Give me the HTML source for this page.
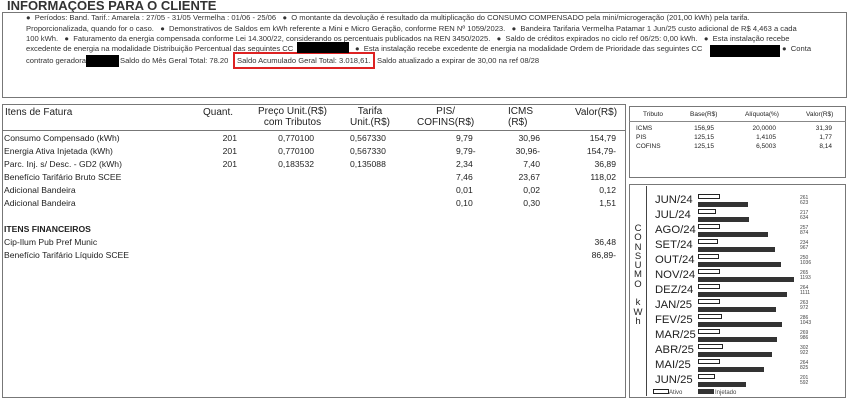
<!DOCTYPE html>
<html><head><meta charset="utf-8"><style>
body{margin:0;width:850px;height:400px;background:#fff;font-family:"Liberation Sans",Arial,sans-serif;color:#222;position:relative;overflow:hidden}
.a{position:absolute;white-space:nowrap}
.box{position:absolute;border:1.5px solid #777;box-sizing:border-box}
.t{font-size:8.6px;line-height:13px}
.s{font-size:7.6px;line-height:11px;color:#333}
.r{text-align:right}
.blk{position:absolute;background:#000}
.c{font-size:6.5px}
</style></head><body>
<div class="a" style="left:7px;top:-2px;font-size:13px;font-weight:bold;color:#333">INFORMAÇÕES PARA O CLIENTE</div>
<div class="box" style="left:2px;top:12px;width:845px;height:86px"></div>
<div class="a s" style="left:26px;top:12px">●&nbsp; Períodos: Band. Tarif.: Amarela : 27/05 - 31/05 Vermelha : 01/06 - 25/06 &nbsp; ●&nbsp; O montante da devolução é resultado da multiplicação do CONSUMO COMPENSADO pela mini/microgeração (201,00 kWh) pela tarifa.</div>
<div class="a s" style="left:26px;top:23px">Proporcionalizada, quando for o caso. &nbsp; ●&nbsp; Demonstrativos de Saldos em kWh referente a Mini e Micro Geração, conforme REN Nº 1059/2023. &nbsp; ●&nbsp; Bandeira Tarifaria Vermelha Patamar 1 Jun/25 custo adicional de R$ 4,463 a cada</div>
<div class="a s" style="left:26px;top:33px">100 kWh. &nbsp; ●&nbsp; Faturamento da energia compensada conforme Lei 14.300/22, considerando os percentuais publicados na REN 3450/2025. &nbsp; ●&nbsp; Saldo de créditos expirados no ciclo ref 06/25: 0,00 kWh. &nbsp; ●&nbsp; Esta instalação recebe</div>
<div class="a s" style="left:26px;top:43px">excedente de energia na modalidade Distribuição Percentual das seguintes CC</div>
<div class="a s" style="left:355px;top:43px">●&nbsp; Esta instalação recebe excedente de energia na modalidade Ordem de Prioridade das seguintes CC</div>
<div class="a s" style="left:782px;top:43px">●&nbsp; Conta</div>
<div class="a s" style="left:26px;top:55px">contrato geradora</div>
<div class="a s" style="left:120px;top:55px">Saldo do Mês Geral Total: 78.20</div>
<div class="a s" style="left:236px;top:55px;outline:2px solid #d22;outline-offset:1px;padding:0 1px">Saldo Acumulado Geral Total: 3.018,61.</div>
<div class="a s" style="left:377px;top:55px">Saldo atualizado a expirar de 30,00 na ref 08/28</div>
<div class="blk" style="left:297px;top:42px;width:52px;height:11px"></div>
<div class="blk" style="left:710px;top:45px;width:70px;height:12px"></div>
<div class="blk" style="left:86px;top:55px;width:33px;height:12px"></div>

<div class="box" style="left:2px;top:104px;width:624px;height:294px"></div>
<div class="a" style="left:2px;top:130px;width:624px;border-top:1.5px solid #777"></div>
<div class="a t" style="left:5px;top:106px;font-size:10px">Itens de Fatura</div>
<div class="a t" style="left:203px;top:106px;font-size:10px">Quant.</div>
<div class="a t" style="left:258px;top:106px;font-size:10px;text-align:center;line-height:11px">Preço Unit.(R$)<br>com Tributos</div>
<div class="a t" style="left:350px;top:106px;font-size:10px;text-align:center;line-height:11px">Tarifa<br>Unit.(R$)</div>
<div class="a t" style="left:417px;top:106px;font-size:10px;text-align:center;line-height:11px">PIS/<br>COFINS(R$)</div>
<div class="a t" style="left:508px;top:106px;font-size:10px;line-height:11px">ICMS<br>(R$)</div>
<div class="a t" style="left:575px;top:106px;font-size:10px">Valor(R$)</div>

<div class="a t" style="left:4px;top:132px">Consumo Compensado (kWh)<br>Energia Ativa Injetada (kWh)<br>Parc. Inj. s/ Desc. - GD2 (kWh)<br>Benefício Tarifário Bruto SCEE<br>Adicional Bandeira<br>Adicional Bandeira<br>&nbsp;<br><b>ITENS FINANCEIROS</b><br>Cip-Ilum Pub Pref Munic<br>Benefício Tarifário Líquido SCEE</div>
<div class="a t r" style="left:210px;top:132px;width:27px">201<br>201<br>201</div>
<div class="a t r" style="left:250px;top:132px;width:64px">0,770100<br>0,770100<br>0,183532</div>
<div class="a t" style="left:350px;top:132px">0,567330<br>0,567330<br>0,135088</div>
<div class="a t" style="left:456px;top:132px">9,79<br>9,79-<br>2,34<br>7,46<br>0,01<br>0,10</div>
<div class="a t r" style="left:500px;top:132px;width:40px">30,96<br>30,96-<br>7,40<br>23,67<br>0,02<br>0,30</div>
<div class="a t r" style="left:570px;top:132px;width:46px">154,79<br>154,79-<br>36,89<br>118,02<br>0,12<br>1,51<br>&nbsp;<br>&nbsp;<br>36,48<br>86,89-</div>

<div class="box" style="left:629px;top:106px;width:217px;height:72px"></div>
<div class="a" style="left:629px;top:121px;width:217px;border-top:1px solid #888"></div>
<div class="a c" style="left:643px;top:111px">Tributo</div>
<div class="a c" style="left:690px;top:111px">Base(R$)</div>
<div class="a c" style="left:745px;top:111px">Alíquota(%)</div>
<div class="a c" style="left:806px;top:111px">Valor(R$)</div>
<div class="a c" style="left:636px;top:124px;line-height:9px">ICMS<br>PIS<br>COFINS</div>
<div class="a c r" style="left:680px;top:124px;width:34px;line-height:9px">156,95<br>125,15<br>125,15</div>
<div class="a c r" style="left:740px;top:124px;width:36px;line-height:9px">20,0000<br>1,4105<br>6,5003</div>
<div class="a c r" style="left:800px;top:124px;width:32px;line-height:9px">31,39<br>1,77<br>8,14</div>

<div class="box" style="left:629px;top:184px;width:217px;height:214px"></div>
<div class="a" style="left:646px;top:186px;height:210px;border-left:1px solid #444"></div>
<div class="a" style="left:633px;top:224px;font-size:9.5px;line-height:9.3px;text-align:center;width:10px">C<br>O<br>N<br>S<br>U<br>M<br>O<br>&nbsp;<br>k<br>W<br>h</div>
<div class="a" style="left:655px;top:193px;font-size:11.3px;line-height:15px">JUN/24<br>JUL/24<br>AGO/24<br>SET/24<br>OUT/24<br>NOV/24<br>DEZ/24<br>JAN/25<br>FEV/25<br>MAR/25<br>ABR/25<br>MAI/25<br>JUN/25</div>
<svg class="a" style="left:0;top:0" width="850" height="400">
<g fill="#fff" stroke="#222" stroke-width="1">
<rect x="698.5" y="194.5" width="21" height="4"/><rect x="698.5" y="209.5" width="17" height="4"/><rect x="698.5" y="224.5" width="21" height="4"/><rect x="698.5" y="239.5" width="19" height="4"/><rect x="698.5" y="254.5" width="20" height="4"/><rect x="698.5" y="269.5" width="21" height="4"/><rect x="698.5" y="284.5" width="21" height="4"/><rect x="698.5" y="299.5" width="21" height="4"/><rect x="698.5" y="314.5" width="23" height="4"/><rect x="698.5" y="329.5" width="21" height="4"/><rect x="698.5" y="344.5" width="24" height="4"/><rect x="698.5" y="359.5" width="21" height="4"/><rect x="698.5" y="374.5" width="16" height="4"/>
<rect x="653.5" y="389.5" width="15" height="4"/>
</g>
<g fill="#333">
<rect x="698" y="202" width="50" height="5"/><rect x="698" y="217" width="51" height="5"/><rect x="698" y="232" width="70" height="5"/><rect x="698" y="247" width="77" height="5"/><rect x="698" y="262" width="83" height="5"/><rect x="698" y="277" width="96" height="5"/><rect x="698" y="292" width="89" height="5"/><rect x="698" y="307" width="78" height="5"/><rect x="698" y="322" width="84" height="5"/><rect x="698" y="337" width="79" height="5"/><rect x="698" y="352" width="74" height="5"/><rect x="698" y="367" width="66" height="5"/><rect x="698" y="382" width="48" height="5"/>
<rect x="698" y="389" width="16" height="5"/>
</g>
<g font-family="Liberation Sans, Arial, sans-serif" font-size="5" fill="#444">
<text x="800" y="199">261</text><text x="800" y="204">623</text>
<text x="800" y="214">217</text><text x="800" y="219">634</text>
<text x="800" y="229">257</text><text x="800" y="234">874</text>
<text x="800" y="244">234</text><text x="800" y="249">967</text>
<text x="800" y="259">250</text><text x="800" y="264">1036</text>
<text x="800" y="274">265</text><text x="800" y="279">1193</text>
<text x="800" y="289">264</text><text x="800" y="294">1111</text>
<text x="800" y="304">263</text><text x="800" y="309">972</text>
<text x="800" y="319">286</text><text x="800" y="324">1043</text>
<text x="800" y="334">269</text><text x="800" y="339">986</text>
<text x="800" y="349">302</text><text x="800" y="354">922</text>
<text x="800" y="364">264</text><text x="800" y="369">825</text>
<text x="800" y="379">201</text><text x="800" y="384">592</text>
<text x="669" y="394" font-size="6">Ativo</text><text x="715" y="394" font-size="6">Injetado</text>
</g>
</svg>
</body></html>
